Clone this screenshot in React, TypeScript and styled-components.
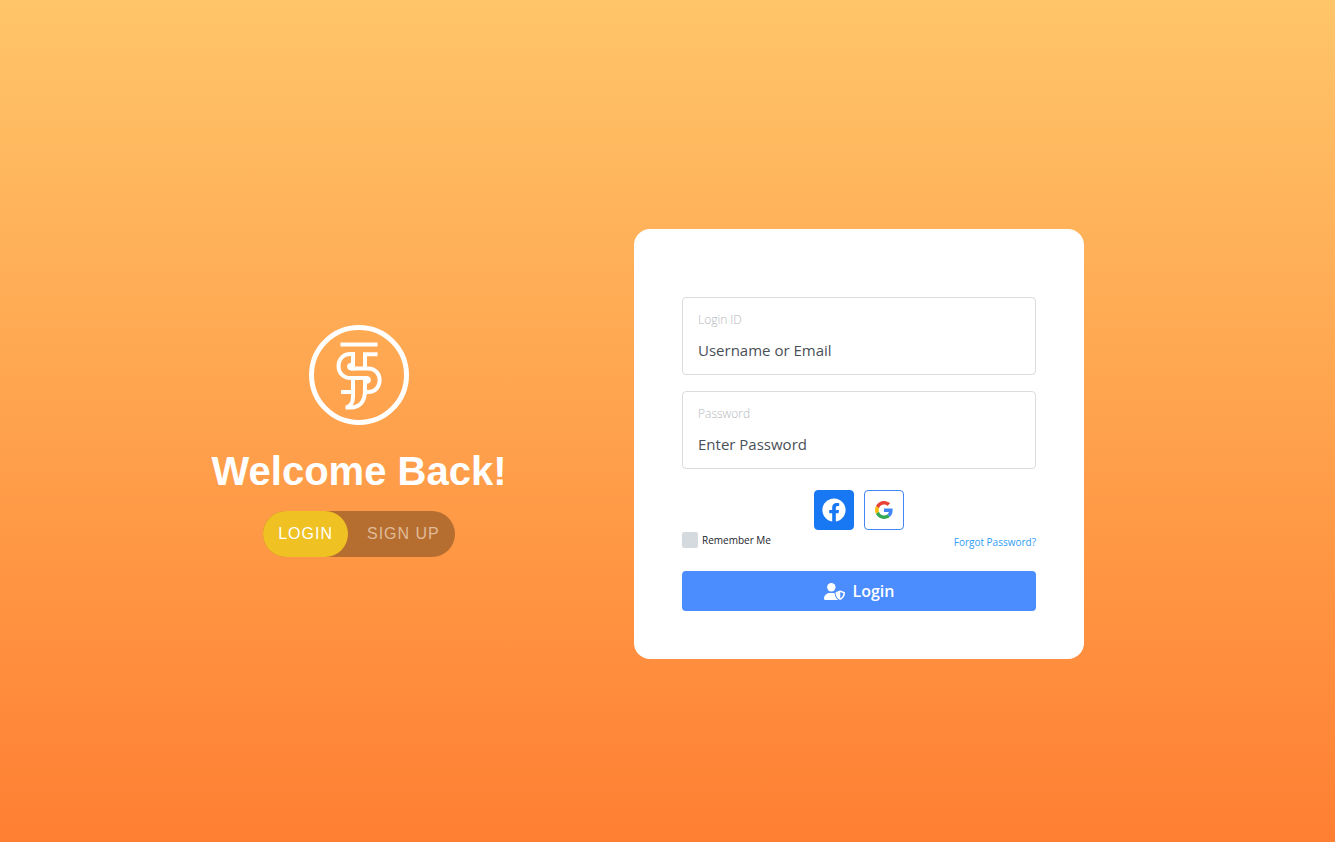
import React from "react";
import styled, { createGlobalStyle } from "styled-components";
import { FaFacebook } from "react-icons/fa";

const GlobalStyle = createGlobalStyle`
  *, *::before, *::after { box-sizing: border-box; }
  body {
    margin: 0;
    font-family: "Open Sans", "Noto Sans", sans-serif;
    color: #212529;
  }
`;

const Page = styled.main`
  min-height: 100vh;
  display: flex;
  align-items: center;
  justify-content: center;
  padding: 46px 117px 0 0;
  background: linear-gradient(#ffc569, #ff7f32);
`;

const Column = styled.section`
  flex: 0 1 500px;
  display: flex;
  flex-direction: column;
  align-items: center;
`;

const Intro = styled(Column)`
  padding-bottom: 6px;
`;

const Logo = styled.svg`
  width: 100px;
  height: 100px;
  fill: none;
  stroke: #fff;
`;

const Title = styled.h1`
  margin: 22px 0 16px;
  font: 700 40px/48px "Liberation Sans", Arial, sans-serif;
  color: #fff;
  white-space: nowrap;
`;

const Switch = styled.nav`
  display: flex;
  height: 46px;
  border-radius: 23px;
  background: #b56e30;
`;

const SwitchButton = styled.button<{ $active?: boolean }>`
  border: 0;
  border-radius: 23px;
  padding: 0 15px;
  font: 400 16px/24px "Liberation Sans", Arial, sans-serif;
  letter-spacing: 1px;
  color: ${(p) => (p.$active ? "#fff" : "#e1bb98")};
  background: ${(p) => (p.$active ? "#efc123" : "transparent")};
  cursor: pointer;
  & + & { padding-left: 19px; }
`;

const Card = styled.form`
  width: 90%;
  padding: 68px 48px 48px;
  border-radius: 16px;
  background: #fff;
`;

const Field = styled.label`
  display: block;
  height: 78px;
  margin-bottom: 16px;
  padding: 12px 15px;
  border: 1px solid #dcdcdc;
  border-radius: 4px;
`;

const FieldName = styled.span`
  display: block;
  font-size: 12px;
  font-weight: 300;
  line-height: 20px;
  color: #b4b8bc;
`;

const Input = styled.input`
  display: block;
  width: 100%;
  height: 24px;
  margin-top: 8px;
  padding: 0;
  border: 0;
  outline: 0;
  font: inherit;
  font-size: 15px;
  &::placeholder { color: #495057; opacity: 1; }
`;

const Socials = styled.div`
  display: flex;
  justify-content: center;
  gap: 10px;
  margin-top: 21px;
`;

const SocialButton = styled.button<{ $filled?: boolean }>`
  display: grid;
  place-items: center;
  width: 40px;
  height: 40px;
  padding: 0;
  border: 1px solid ${(p) => (p.$filled ? "#1877f2" : "#4285f4")};
  border-radius: 4px;
  color: #fff;
  background: ${(p) => (p.$filled ? "#1877f2" : "#fff")};
  cursor: pointer;
`;

const Options = styled.div`
  display: flex;
  justify-content: space-between;
  align-items: flex-start;
  margin: 2px 0 21px;
  font-size: 10px;
  line-height: 16px;
`;

const Remember = styled.label`
  display: flex;
  gap: 4px;
`;

const Checkbox = styled.input`
  appearance: none;
  width: 16px;
  height: 16px;
  margin: 0;
  border-radius: 2px;
  background: #d5dadf;
  &:checked { background: #4b8dff; }
`;

const Forgot = styled.a`
  padding-top: 2px;
  color: #2e9df4;
  text-decoration: none;
`;

const Submit = styled.button`
  display: flex;
  align-items: center;
  justify-content: center;
  gap: 8px;
  width: 100%;
  height: 40px;
  border: 0;
  border-radius: 4px;
  font: inherit;
  font-size: 16px;
  font-weight: 600;
  color: #fff;
  background: #4b8dff;
  cursor: pointer;
`;

const GoogleIcon = () => (
  <svg width="18" height="18" viewBox="0 0 48 48" aria-hidden="true">
    <path fill="#EA4335" d="M24 9.5c3.54 0 6.71 1.22 9.21 3.6l6.85-6.85C35.9 2.38 30.47 0 24 0 14.62 0 6.51 5.38 2.56 13.22l7.98 6.19C12.43 13.72 17.74 9.5 24 9.5z" />
    <path fill="#4285F4" d="M46.98 24.55c0-1.57-.15-3.09-.38-4.55H24v9.02h12.94c-.58 2.96-2.26 5.48-4.78 7.18l7.73 6c4.51-4.18 7.09-10.36 7.09-17.65z" />
    <path fill="#FBBC05" d="M10.53 28.59c-.48-1.45-.76-2.99-.76-4.59s.27-3.14.76-4.59l-7.98-6.19C.92 16.46 0 20.12 0 24c0 3.88.92 7.54 2.56 10.78l7.97-6.19z" />
    <path fill="#34A853" d="M24 48c6.48 0 11.93-2.13 15.89-5.81l-7.73-6c-2.15 1.45-4.92 2.3-8.16 2.3-6.26 0-11.57-4.22-13.47-9.91l-7.98 6.19C6.51 42.62 14.62 48 24 48z" />
  </svg>
);

const UserShieldIcon = () => (
  <svg width="21" height="17" viewBox="0 0 640 512" fill="currentColor" aria-hidden="true">
    <circle cx="224" cy="128" r="128" />
    <path d="M274.700 304H173.300C77.600 304 0 381.600 0 477.300C0 496.500 15.500 512 34.700 512H413C419 512 424 510.500 430 508C375 477 330 410 325 310C309 306 292 304 274.700 304z" />
    <path
      fillRule="evenodd"
      d="M622 271L507 226C500 223.500 492 223.500 485 226L370 271C359 275 352 285 352 296C352 408 421 485 485 510C494 514 502 513 507 510C558 490 640 421 640 296C640 285 633 275 622 271zM496 462V273L591 310C586 398 531 445 496 462z"
    />
  </svg>
);

export default function App() {
  return (
    <>
      <GlobalStyle />
      <Page>
        <Intro>
          <Logo viewBox="0 0 100 100" aria-hidden="true">
            <circle cx="50" cy="50" r="47.5" strokeWidth="5" />
            <g strokeWidth="4">
              <path d="M31.500 19.500H68.500" />
              <path d="M46 29H41.500C25.500 29 25.500 53 41.500 53H58" />
              <path d="M42 43.500H59C74.500 43.500 74.500 67 59 67H54.500" />
              <path d="M68.500 29.200H56V43" />
              <path d="M32 67H44V53" />
              <path d="M44 27V39" />
              <path d="M56 57V66C56 77 50 82.500 42 82.500H36.500C41 82.500 44 78 44 72V66" />
            </g>
            <g fill="#fff" stroke="none">
              <path d="M46 36V45.500H42C37 45 37 38.500 41 38Z" />
              <path d="M54 60V51H58C63 51.500 63 58 59 58.500Z" />
            </g>
          </Logo>
          <Title>Welcome Back!</Title>
          <Switch aria-label="Account">
            <SwitchButton type="button" $active>LOGIN</SwitchButton>
            <SwitchButton type="button">SIGN UP</SwitchButton>
          </Switch>
        </Intro>
        <Column>
          <Card onSubmit={(e) => e.preventDefault()}>
            <Field>
              <FieldName>Login ID</FieldName>
              <Input type="text" placeholder="Username or Email" />
            </Field>
            <Field>
              <FieldName>Password</FieldName>
              <Input type="password" placeholder="Enter Password" />
            </Field>
            <Socials>
              <SocialButton type="button" $filled aria-label="Facebook">
                <FaFacebook size={24} />
              </SocialButton>
              <SocialButton type="button" aria-label="Google">
                <GoogleIcon />
              </SocialButton>
            </Socials>
            <Options>
              <Remember>
                <Checkbox type="checkbox" />
                Remember Me
              </Remember>
              <Forgot href="#forgot">Forgot Password?</Forgot>
            </Options>
            <Submit type="submit">
              <UserShieldIcon />
              Login
            </Submit>
          </Card>
        </Column>
      </Page>
    </>
  );
}
